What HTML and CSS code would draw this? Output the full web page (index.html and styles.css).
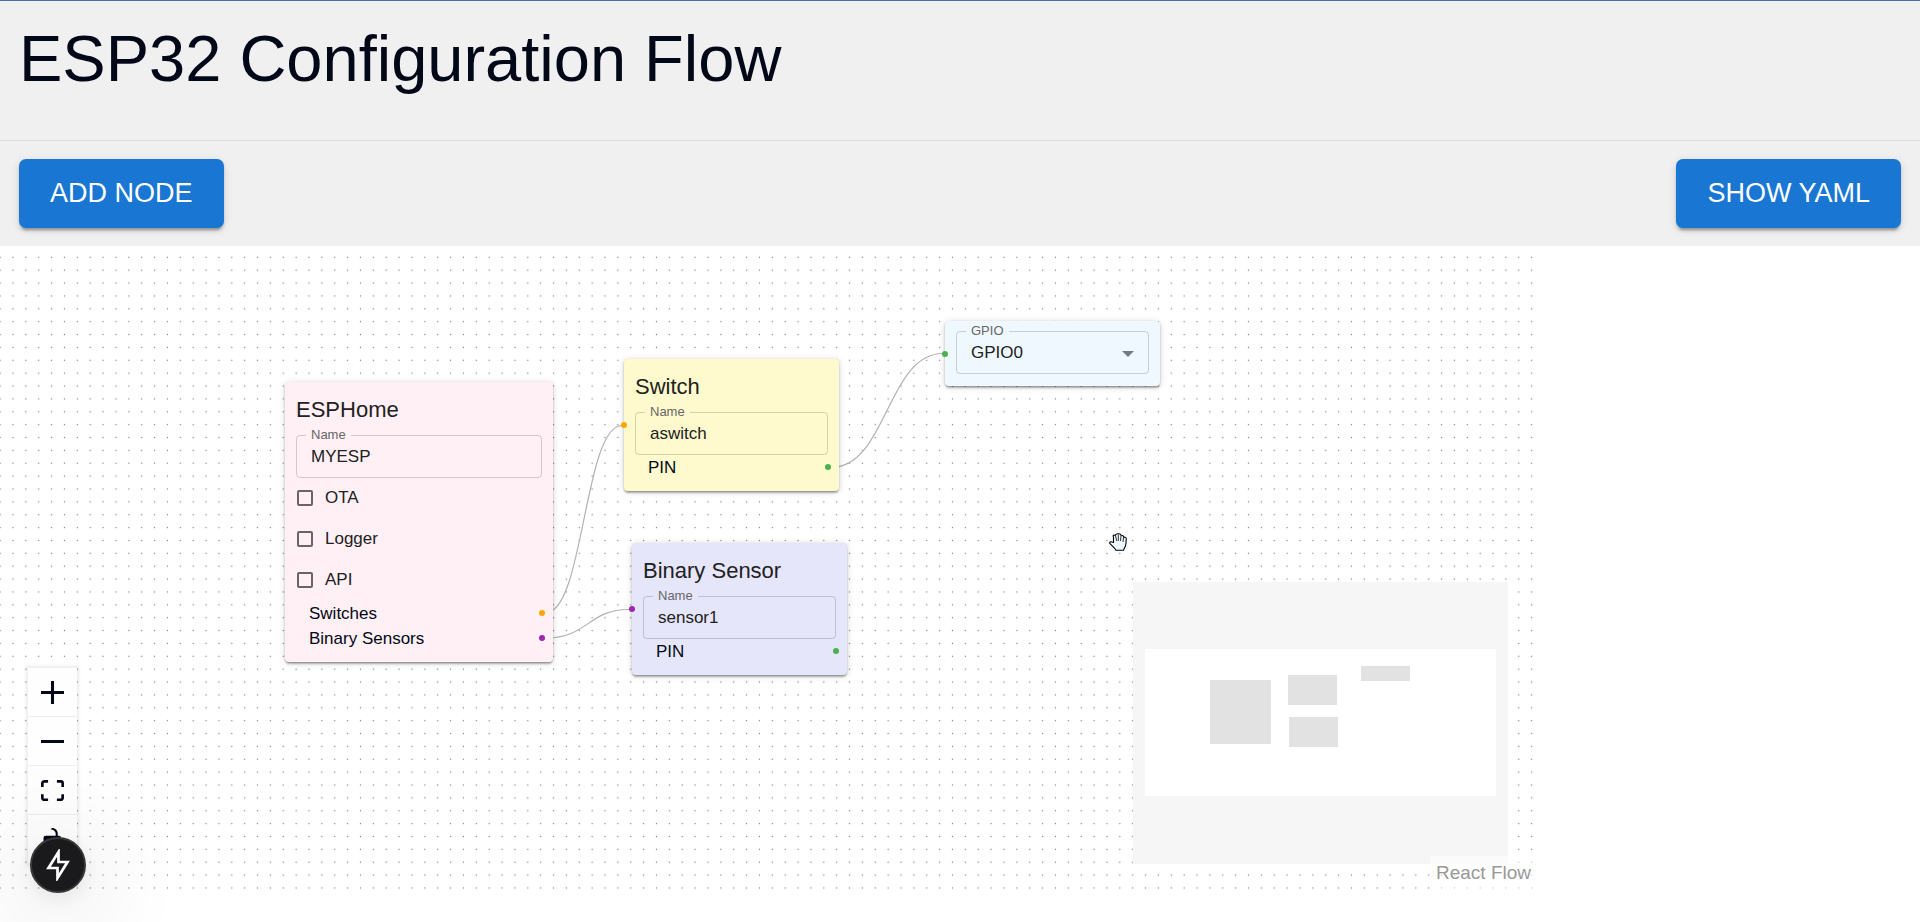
FILE: index.html
```html
<!DOCTYPE html>
<html lang="en">
<head>
<meta charset="utf-8">
<title>ESP32 Configuration Flow</title>
<link rel="stylesheet" href="styles.css">
</head>
<body>
<header class="header">
  <h1 class="header-title">ESP32 Configuration Flow</h1>
</header>
<div class="toolbar">
  <button class="btn" type="button">ADD NODE</button>
  <button class="btn" type="button">SHOW YAML</button>
</div>
<main class="flow">
  <svg class="flow-layer" aria-hidden="true">
    <defs>
      <pattern id="dots" width="12.87" height="12.87" patternUnits="userSpaceOnUse" patternTransform="translate(-6.3 4.9)">
        <circle cx="6.43" cy="6.43" r="0.7" fill="#81818a"/>
      </pattern>
    </defs>
    <rect width="100%" height="100%" fill="url(#dots)"/>
    <g fill="none" stroke="#b1b1b7" stroke-width="1.2">
      <path d="M546 366.500C584 366.500 584 179.500 622 179.500"/>
      <path d="M546 392C588 392 588 363.500 629 363.500"/>
      <path d="M831 221.500C887 221.500 887 107.500 943 107.500"/>
    </g>
  </svg>

  <section class="node node-esphome">
    <h2 class="node-title">ESPHome</h2>
    <fieldset class="field">
      <legend class="field-label"><label for="esp-name">Name</label></legend>
      <input class="field-input" id="esp-name" type="text" value="MYESP">
    </fieldset>
    <div class="checks">
      <label class="check"><input class="check-box" type="checkbox">OTA</label>
      <label class="check"><input class="check-box" type="checkbox">Logger</label>
      <label class="check"><input class="check-box" type="checkbox">API</label>
    </div>
    <div class="port">Switches<span class="handle handle-switch"></span></div>
    <div class="port">Binary Sensors<span class="handle handle-sensor"></span></div>
  </section>

  <section class="node node-switch">
    <span class="handle handle-in handle-switch"></span>
    <h2 class="node-title">Switch</h2>
    <fieldset class="field">
      <legend class="field-label"><label for="switch-name">Name</label></legend>
      <input class="field-input" id="switch-name" type="text" value="aswitch">
    </fieldset>
    <div class="port">PIN<span class="handle handle-pin"></span></div>
  </section>

  <section class="node node-sensor">
    <span class="handle handle-in handle-sensor"></span>
    <h2 class="node-title">Binary Sensor</h2>
    <fieldset class="field">
      <legend class="field-label"><label for="sensor-name">Name</label></legend>
      <input class="field-input" id="sensor-name" type="text" value="sensor1">
    </fieldset>
    <div class="port">PIN<span class="handle handle-pin"></span></div>
  </section>

  <section class="node node-gpio">
    <span class="handle handle-in handle-pin"></span>
    <fieldset class="field">
      <legend class="field-label"><label for="gpio">GPIO</label></legend>
      <select class="field-input" id="gpio"><option>GPIO0</option></select>
      <svg class="caret" viewBox="0 0 10 5" aria-hidden="true"><path d="M0 0h10L5 5z" fill="#757a7e"/></svg>
    </fieldset>
  </section>

  <svg class="cursor" viewBox="0 0 18 18" aria-hidden="true">
    <path d="M4.500 9.500V4.500C3.500 2 5 1.500 6.300 2.500 7 .8 8.300 .5 9.500 .8c1.300-.2 2.200.4 2.500 1.500 1.500-.3 2.500.6 2.600 2 1.500-.5 2.700.2 2.700 1.700-.3 1.500-.3 3-.3 4.500-.3 3-1.500 4-2.500 6.800H7C5.500 14.500 2.500 12.500 .8 10.300c-.5-1.300 1-2 2.200-1.300z" fill="#f0f8ff" stroke="#000" stroke-width="1.100" stroke-linejoin="round"/>
    <path d="M6.500 3l1.300 5M9.300 1.500V8M12 2.500L11.500 8M14.500 4.500L14 9" stroke="#000" stroke-width=".8" fill="none"/>
  </svg>

  <div class="controls">
    <button class="control" type="button" aria-label="zoom in"><svg viewBox="0 0 32 32"><path d="M32 18.133H18.133V32h-4.266V18.133H0v-4.266h13.867V0h4.266v13.867H32z"/></svg></button>
    <button class="control" type="button" aria-label="zoom out"><svg viewBox="0 0 32 5"><path d="M0 0h32v4.200H0z"/></svg></button>
    <button class="control" type="button" aria-label="fit view"><svg viewBox="0 0 32 30"><path d="M3.692 4.630c0-.53.400-.938.939-.938h5.215V0H4.708C2.130 0 0 2.054 0 4.630v5.216h3.692V4.631zM27.354 0h-5.200v3.692h5.170c.530 0 .984.400.984.939v5.215H32V4.631A4.624 4.624 0 0 0 27.354 0zm.954 24.830c0 .532-.400.940-.939.940h-5.215v3.768h5.215c2.577 0 4.631-2.130 4.631-4.707v-5.139h-3.692v5.139zm-23.677.940a.919.919 0 0 1-.939-.940v-5.138H0v5.139c0 2.577 2.130 4.707 4.708 4.707h5.138V25.770H4.631z"/></svg></button>
    <button class="control" type="button" aria-label="lock"><svg viewBox="0 0 25 32"><path d="M21.333 10.667H19.810V7.619C19.810 3.429 16.380 0 12.190 0c-4.114 1.828-1.370 2.133.305 2.438 1.676.305 4.420 2.590 4.420 5.181v3.048H3.047A3.056 3.056 0 0 0 0 13.714v15.238A3.056 3.056 0 0 0 3.048 32h18.285a3.056 3.056 0 0 0 3.048-3.048V13.714a3.056 3.056 0 0 0-3.048-3.047z"/></svg></button>
  </div>

  <svg class="minimap" viewBox="0 0 375 282" role="img" aria-label="Mini map">
    <path fill="#fff" d="M0 0h375v282H0z"/>
    <g fill="#e2e2e2">
      <path d="M77 98h61v64H77zM155 93h49v30h-49zM156 135h49v30h-49zM228 84h49v15h-49z"/>
    </g>
    <path fill="#f6f6f6" fill-rule="evenodd" d="M0 0h375v282H0zM12 67v147h351V67z"/>
  </svg>
  <a class="attribution" href="#">React Flow</a>
</main>
<button class="dev-badge" type="button" aria-label="Developer tools">
  <svg viewBox="0 0 24 32" aria-hidden="true"><path d="M12.500 3v10H21.500L11.500 29V19H2.500z" fill="none" stroke="#fff" stroke-width="2.700"/></svg>
</button>
</body>
</html>
```
FILE: styles.css
```css
* {
  box-sizing: border-box;
}

body {
  margin: 0;
  min-height: 100vh;
  overflow: hidden;
  background: #fff;
  color: #020817;
  font-family: "Liberation Sans", Arial, sans-serif;
  font-size: 17px;
}

h1,
h2 {
  margin: 0;
  font-weight: 400;
}

.header {
  padding: 20px 19px 43px;
  border-top: 1px solid #4472b0;
  border-bottom: 1px solid #dcdcdc;
  background: #f0f0f0;
}

.header-title {
  font-size: 65px;
  line-height: 76px;
}

.toolbar {
  display: flex;
  justify-content: space-between;
  padding: 18px 19px;
  background: #f0f0f0;
}

.btn {
  padding: 0 31px;
  border: 0;
  border-radius: 7px;
  background: #1976d2;
  box-shadow: 0 5px 2px -3px rgba(0, 0, 0, 0.2), 0 3px 3px rgba(0, 0, 0, 0.14), 0 2px 8px rgba(0, 0, 0, 0.12);
  color: #fff;
  font-family: inherit;
  font-size: 27px;
  line-height: 69px;
}

.flow {
  position: relative;
  width: 80%;
  height: 70vh;
}

.flow-layer {
  position: absolute;
  inset: 0;
  width: 100%;
  height: 100%;
}

/* Nodes are placed freely on the canvas */
.node {
  position: absolute;
  width: 215px;
  padding: 11px;
  border-radius: 4px;
  box-shadow: 0 3px 2px -1px rgba(0, 0, 0, 0.2), 0 1px 2px rgba(0, 0, 0, 0.24), 0 1px 7px rgba(0, 0, 0, 0.16);
}

.node-esphome {
  top: 136px;
  left: 285px;
  width: 268px;
  background: #fff0f5;
}

.node-switch {
  top: 113px;
  left: 624px;
  background: #fffacd;
}

.node-sensor {
  top: 297px;
  left: 632px;
  background: #e6e6fa;
}

.node-gpio {
  top: 75px;
  left: 945px;
  padding-top: 3px;
  padding-bottom: 12px;
  background: #f0f8ff;
}

.node-title {
  padding: 2px 0 3px;
  color: #212121;
  font-size: 22px;
  line-height: 30px;
}

.field {
  display: flex;
  align-items: center;
  min-width: 0;
  margin: 0;
  padding: 0 14px;
  border: 1px solid rgba(0, 0, 0, 0.17);
  border-radius: 4px;
}

.field-label {
  margin-left: -5px;
  padding: 0 5px;
  color: #666;
  font-size: 13px;
  line-height: 14px;
}

.field-input {
  flex: 1;
  width: 100%;
  min-width: 0;
  height: 35px;
  margin: 0;
  padding: 0 0 6px;
  border: 0;
  outline: 0;
  appearance: none;
  background: transparent;
  color: #212121;
  font-family: inherit;
  font-size: 17px;
}

.caret {
  width: 12px;
  height: 6px;
  margin-bottom: 4px;
}

.checks {
  display: grid;
  gap: 16px;
  padding: 7px 0 9px 1px;
}

.check {
  display: flex;
  align-items: center;
  gap: 12px;
  color: #212121;
  line-height: 25px;
}

.check-box {
  width: 16px;
  height: 16px;
  margin: 0;
  border: 2px solid #6b6467;
  border-radius: 2px;
  appearance: none;
}

.port {
  position: relative;
  padding-left: 13px;
  line-height: 25px;
}

.handle {
  position: absolute;
  top: 9px;
  right: -3px;
  width: 6px;
  height: 6px;
  border-radius: 50%;
}

.handle-in {
  top: 50%;
  right: auto;
  left: -3px;
  margin-top: -3px;
}

.handle-switch {
  background: #ffa500;
}

.handle-sensor {
  background: #9c27b0;
}

.handle-pin {
  background: #4caf50;
}

.cursor {
  position: absolute;
  top: 287px;
  left: 1109px;
  width: 18px;
  height: 18px;
}

.controls {
  position: absolute;
  bottom: 27px;
  left: 28px;
  display: flex;
  flex-direction: column;
  box-shadow: 0 0 3px 2px rgba(0, 0, 0, 0.08);
}

.control {
  display: flex;
  align-items: center;
  justify-content: center;
  width: 49px;
  height: 49px;
  padding: 0;
  border: 0;
  border-bottom: 1px solid #eee;
  background: #fefefe;
}

.control svg {
  width: 23px;
  max-height: 23px;
  fill: #020817;
}

.minimap {
  position: absolute;
  right: 28px;
  bottom: 27px;
  width: 375px;
  height: 282px;
}

.attribution {
  position: absolute;
  right: 0;
  bottom: 0;
  padding: 6px 5px 7px 6px;
  background: rgba(255, 255, 255, 0.5);
  color: #999;
  font-size: 19px;
  line-height: 22px;
  text-decoration: none;
}

.dev-badge {
  position: fixed;
  bottom: 29px;
  left: 30px;
  display: flex;
  align-items: center;
  justify-content: center;
  width: 56px;
  height: 56px;
  padding: 0;
  border: 2px solid #38383a;
  border-radius: 50%;
  background: #1a1a1c;
  box-shadow: 0 12px 100px rgba(0, 0, 0, 0.24), 0 6px 20px rgba(0, 0, 0, 0.08);
}

.dev-badge svg {
  width: 24px;
  height: 32px;
}
```
